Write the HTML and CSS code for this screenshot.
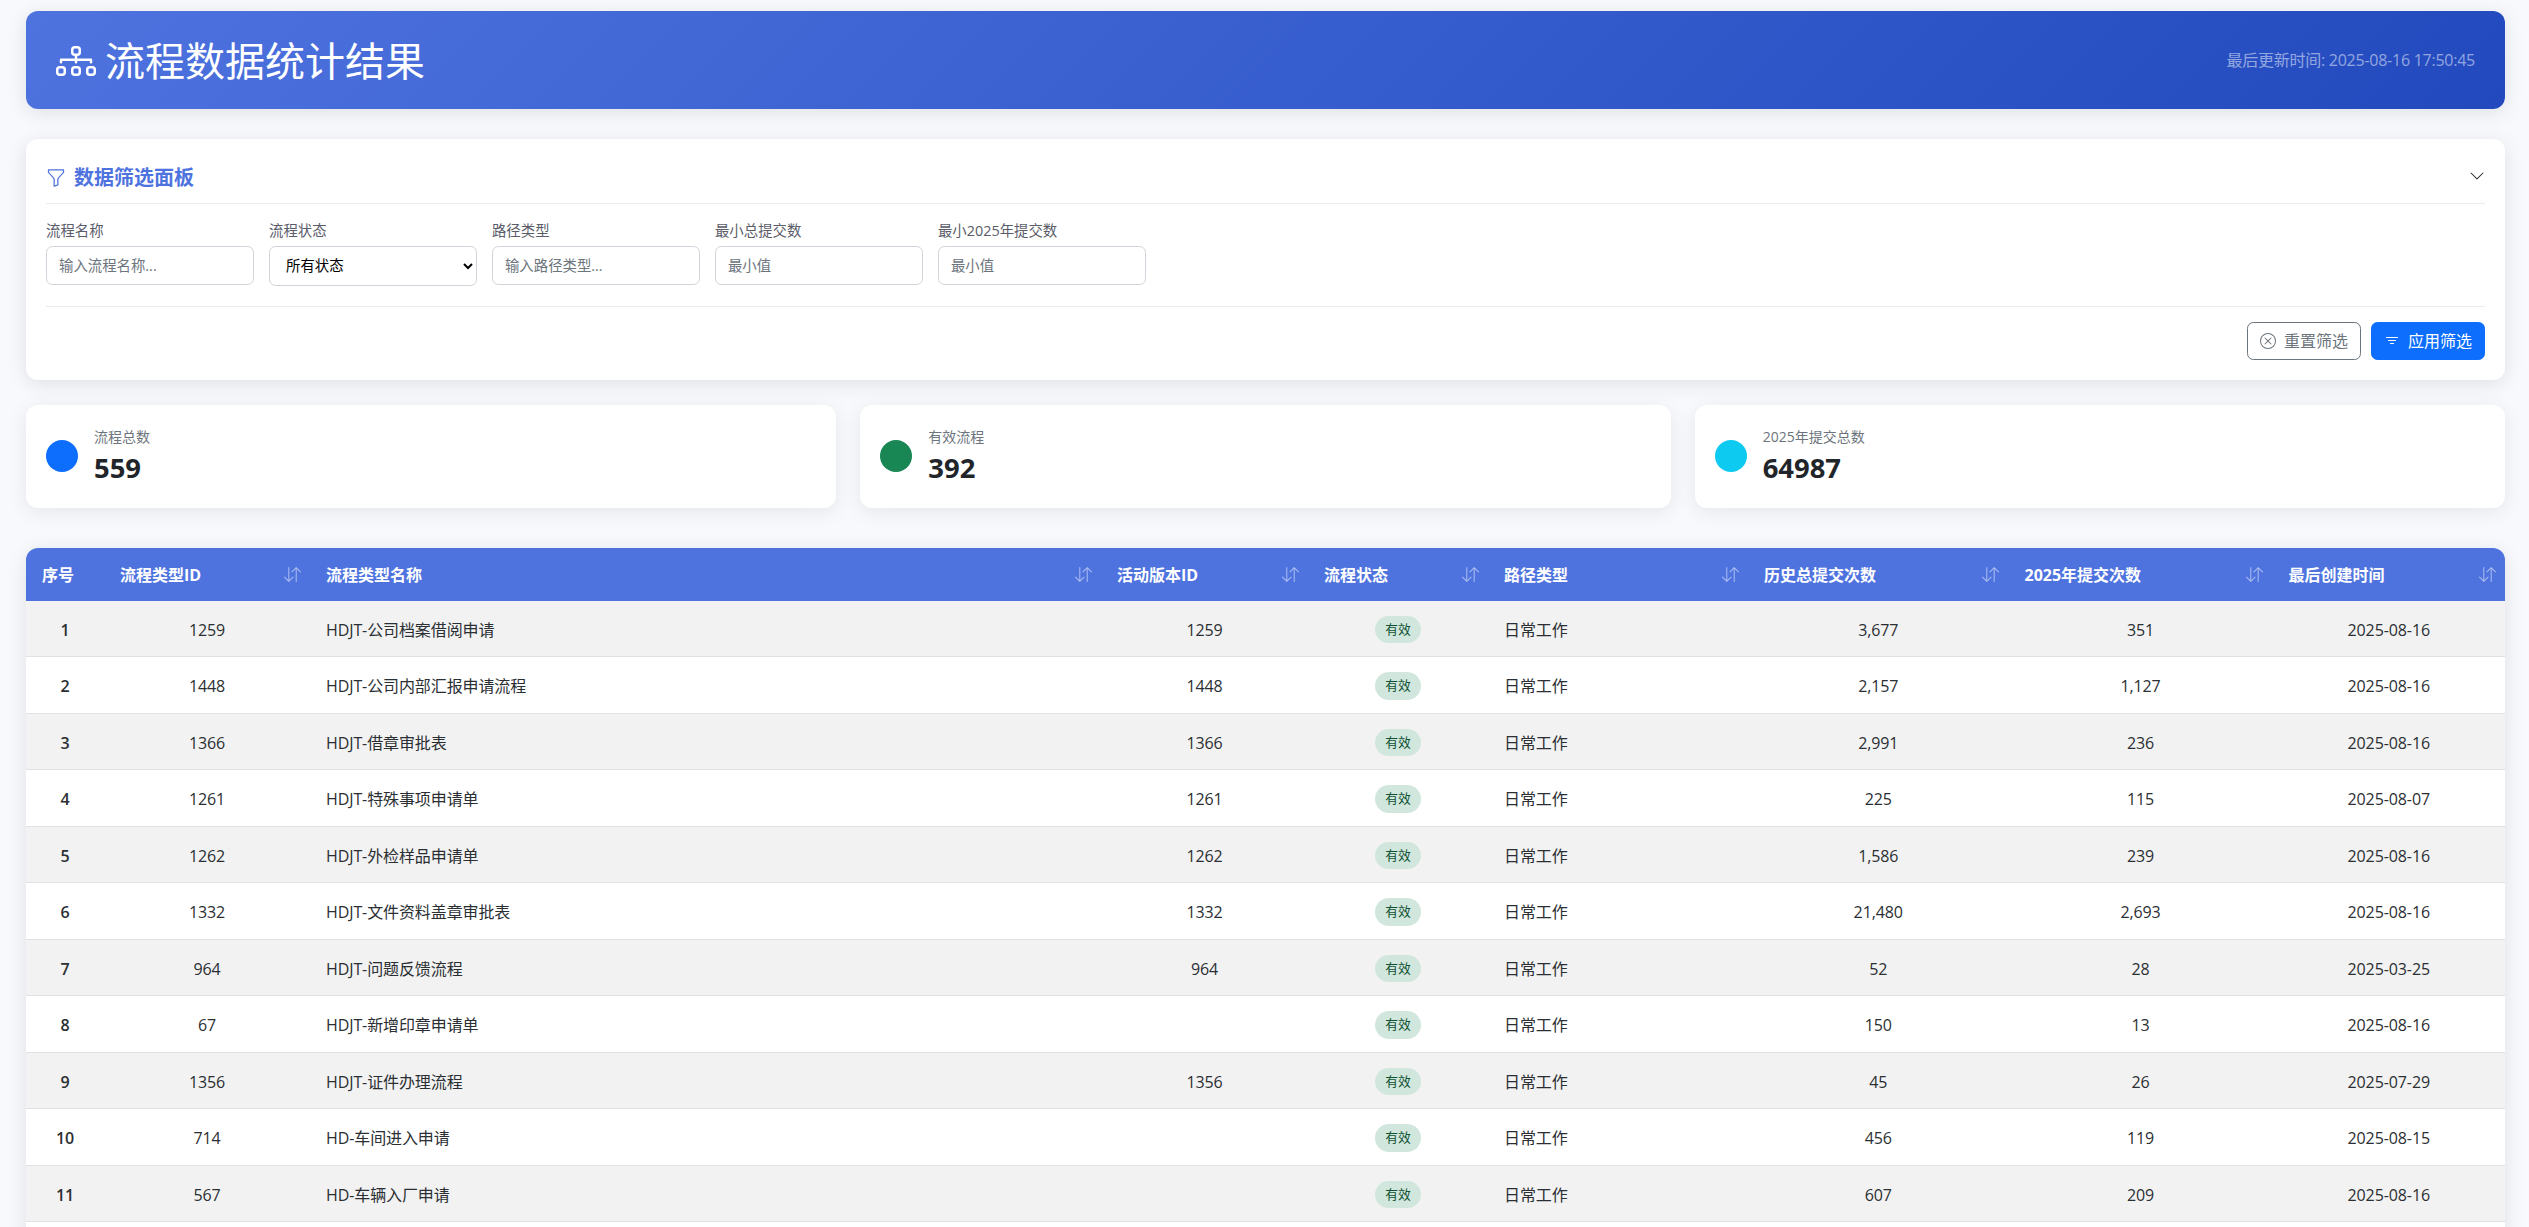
FILE: index.html
```html
<!DOCTYPE html>
<html lang="zh-CN">
<head>
<meta charset="utf-8">
<title>流程数据统计结果</title>
<link rel="stylesheet" href="styles.css">
</head>
<body>
<svg class="defs" width="0" height="0" aria-hidden="true">
  <symbol id="i-sort" viewBox="0 0 16 16"><path fill-rule="evenodd" d="M11.5 15a.5.5 0 0 0 .5-.5V2.707l3.146 3.147a.5.5 0 0 0 .708-.708l-4-4a.5.5 0 0 0-.708 0l-4 4a.5.5 0 1 0 .708.708L11 2.707V14.5a.5.5 0 0 0 .5.5zm-7-14a.5.5 0 0 1 .5.5v11.793l3.146-3.147a.5.5 0 0 1 .708.708l-4 4a.5.5 0 0 1-.708 0l-4-4a.5.5 0 0 1 .708-.708L4 13.293V1.5a.5.5 0 0 1 .5-.5z"/></symbol>
</svg>
<main class="page">
  <header class="hero">
    <h1 class="hero-title">
      <svg class="hero-icon" viewBox="0 0 16 16" fill="currentColor"><path fill-rule="evenodd" d="M6 3.5A1.5 1.5 0 0 1 7.5 2h1A1.5 1.5 0 0 1 10 3.5v1A1.5 1.5 0 0 1 8.5 6v1H14a.5.5 0 0 1 .5.5v1a.5.5 0 0 1-1 0V8h-5v.5a.5.5 0 0 1-1 0V8h-5v.5a.5.5 0 0 1-1 0v-1A.5.5 0 0 1 2 7h5.5V6A1.5 1.5 0 0 1 6 4.5v-1zM8.5 5a.5.5 0 0 0 .5-.5v-1a.5.5 0 0 0-.5-.5h-1a.5.5 0 0 0-.5.5v1a.5.5 0 0 0 .5.5h1zM0 11.5A1.5 1.5 0 0 1 1.5 10h1A1.5 1.5 0 0 1 4 11.5v1A1.5 1.5 0 0 1 2.5 14h-1A1.5 1.5 0 0 1 0 12.5v-1zm1.5-.5a.5.5 0 0 0-.5.5v1a.5.5 0 0 0 .5.5h1a.5.5 0 0 0 .5-.5v-1a.5.5 0 0 0-.5-.5h-1zm4.5.5A1.5 1.5 0 0 1 7.5 10h1a1.5 1.5 0 0 1 1.5 1.5v1A1.5 1.5 0 0 1 8.5 14h-1A1.5 1.5 0 0 1 6 12.5v-1zm1.5-.5a.5.5 0 0 0-.5.5v1a.5.5 0 0 0 .5.5h1a.5.5 0 0 0 .5-.5v-1a.5.5 0 0 0-.5-.5h-1zm4.5.5a1.5 1.5 0 0 1 1.5-1.5h1a1.5 1.5 0 0 1 1.5 1.5v1a1.5 1.5 0 0 1-1.5 1.5h-1a1.5 1.5 0 0 1-1.5-1.5v-1zm1.5-.5a.5.5 0 0 0-.5.5v1a.5.5 0 0 0 .5.5h1a.5.5 0 0 0 .5-.5v-1a.5.5 0 0 0-.5-.5h-1z"/></svg>
      <span>流程数据统计结果</span>
    </h1>
    <div class="hero-time">最后更新时间: 2025-08-16 17:50:45</div>
  </header>

  <section class="panel">
    <div class="panel-head">
      <h2 class="panel-title">
        <svg class="panel-icon" viewBox="0 0 16 16" fill="currentColor"><path d="M1.5 1.5A.5.5 0 0 1 2 1h12a.5.5 0 0 1 .5.5v2a.5.5 0 0 1-.128.334L10 8.692V13.5a.5.5 0 0 1-.342.474l-3 1A.5.5 0 0 1 6 14.5V8.692L1.628 3.834A.5.5 0 0 1 1.5 3.5v-2zm1 .5v1.308l4.372 4.858A.5.5 0 0 1 7 8.5v5.306l2-.666V8.5a.5.5 0 0 1 .128-.334L13.5 3.308V2h-11z"/></svg>
        <span>数据筛选面板</span>
      </h2>
      <svg class="chevron" viewBox="0 0 16 16" fill="currentColor"><path fill-rule="evenodd" d="M1.646 4.646a.5.5 0 0 1 .708 0L8 10.293l5.646-5.647a.5.5 0 0 1 .708.708l-6 6a.5.5 0 0 1-.708 0l-6-6a.5.5 0 0 1 0-.708z"/></svg>
    </div>
    <div class="filters">
      <label class="field"><span class="field-label">流程名称</span><input class="control" type="text" placeholder="输入流程名称..."></label>
      <label class="field"><span class="field-label">流程状态</span><select class="control control-select"><option>所有状态</option><option>有效</option><option>无效</option></select></label>
      <label class="field"><span class="field-label">路径类型</span><input class="control" type="text" placeholder="输入路径类型..."></label>
      <label class="field"><span class="field-label">最小总提交数</span><input class="control" type="text" placeholder="最小值"></label>
      <label class="field"><span class="field-label">最小2025年提交数</span><input class="control" type="text" placeholder="最小值"></label>
    </div>
    <div class="actions">
      <button class="btn btn-reset" type="button">
        <svg class="btn-icon" viewBox="0 0 16 16" fill="currentColor"><path d="M8 15A7 7 0 1 1 8 1a7 7 0 0 1 0 14zm0 1A8 8 0 1 0 8 0a8 8 0 0 0 0 16z"/><path d="M4.646 4.646a.5.5 0 0 1 .708 0L8 7.293l2.646-2.647a.5.5 0 0 1 .708.708L8.707 8l2.647 2.646a.5.5 0 0 1-.708.708L8 8.707l-2.646 2.647a.5.5 0 0 1-.708-.708L7.293 8 4.646 5.354a.5.5 0 0 1 0-.708z"/></svg>
        <span>重置筛选</span>
      </button>
      <button class="btn btn-apply" type="button">
        <svg class="btn-icon" viewBox="0 0 16 16" fill="currentColor"><path d="M6 10.5a.5.5 0 0 1 .5-.5h3a.5.5 0 0 1 0 1h-3a.5.5 0 0 1-.5-.5zm-2-3a.5.5 0 0 1 .5-.5h7a.5.5 0 0 1 0 1h-7a.5.5 0 0 1-.5-.5zm-2-3a.5.5 0 0 1 .5-.5h11a.5.5 0 0 1 0 1h-11a.5.5 0 0 1-.5-.5z"/></svg>
        <span>应用筛选</span>
      </button>
    </div>
  </section>

  <section class="stats">
    <div class="stat"><span class="dot dot-blue"></span><div><div class="stat-label">流程总数</div><div class="stat-value">559</div></div></div>
    <div class="stat"><span class="dot dot-green"></span><div><div class="stat-label">有效流程</div><div class="stat-value">392</div></div></div>
    <div class="stat"><span class="dot dot-cyan"></span><div><div class="stat-label">2025年提交总数</div><div class="stat-value">64987</div></div></div>
  </section>

  <section class="table-card">
    <table class="grid">
      <colgroup>
        <col class="w1"><col class="w2"><col class="w3"><col class="w4"><col class="w5"><col class="w6"><col class="w7"><col class="w8"><col class="w9">
      </colgroup>
      <thead>
        <tr>
          <th>序号</th>
          <th><div class="th-in"><span>流程类型ID</span><svg class="sort"><use href="#i-sort"/></svg></div></th>
          <th><div class="th-in"><span>流程类型名称</span><svg class="sort"><use href="#i-sort"/></svg></div></th>
          <th><div class="th-in"><span>活动版本ID</span><svg class="sort"><use href="#i-sort"/></svg></div></th>
          <th><div class="th-in"><span>流程状态</span><svg class="sort"><use href="#i-sort"/></svg></div></th>
          <th><div class="th-in"><span>路径类型</span><svg class="sort"><use href="#i-sort"/></svg></div></th>
          <th><div class="th-in"><span>历史总提交次数</span><svg class="sort"><use href="#i-sort"/></svg></div></th>
          <th><div class="th-in"><span>2025年提交次数</span><svg class="sort"><use href="#i-sort"/></svg></div></th>
          <th><div class="th-in"><span>最后创建时间</span><svg class="sort"><use href="#i-sort"/></svg></div></th>
        </tr>
      </thead>
      <tbody>
        <tr><td class="num">1</td><td class="mid">1259</td><td>HDJT-公司档案借阅申请</td><td class="mid">1259</td><td class="mid"><span class="badge">有效</span></td><td>日常工作</td><td class="mid">3,677</td><td class="mid">351</td><td class="mid">2025-08-16</td></tr>
        <tr><td class="num">2</td><td class="mid">1448</td><td>HDJT-公司内部汇报申请流程</td><td class="mid">1448</td><td class="mid"><span class="badge">有效</span></td><td>日常工作</td><td class="mid">2,157</td><td class="mid">1,127</td><td class="mid">2025-08-16</td></tr>
        <tr><td class="num">3</td><td class="mid">1366</td><td>HDJT-借章审批表</td><td class="mid">1366</td><td class="mid"><span class="badge">有效</span></td><td>日常工作</td><td class="mid">2,991</td><td class="mid">236</td><td class="mid">2025-08-16</td></tr>
        <tr><td class="num">4</td><td class="mid">1261</td><td>HDJT-特殊事项申请单</td><td class="mid">1261</td><td class="mid"><span class="badge">有效</span></td><td>日常工作</td><td class="mid">225</td><td class="mid">115</td><td class="mid">2025-08-07</td></tr>
        <tr><td class="num">5</td><td class="mid">1262</td><td>HDJT-外检样品申请单</td><td class="mid">1262</td><td class="mid"><span class="badge">有效</span></td><td>日常工作</td><td class="mid">1,586</td><td class="mid">239</td><td class="mid">2025-08-16</td></tr>
        <tr><td class="num">6</td><td class="mid">1332</td><td>HDJT-文件资料盖章审批表</td><td class="mid">1332</td><td class="mid"><span class="badge">有效</span></td><td>日常工作</td><td class="mid">21,480</td><td class="mid">2,693</td><td class="mid">2025-08-16</td></tr>
        <tr><td class="num">7</td><td class="mid">964</td><td>HDJT-问题反馈流程</td><td class="mid">964</td><td class="mid"><span class="badge">有效</span></td><td>日常工作</td><td class="mid">52</td><td class="mid">28</td><td class="mid">2025-03-25</td></tr>
        <tr><td class="num">8</td><td class="mid">67</td><td>HDJT-新增印章申请单</td><td class="mid"></td><td class="mid"><span class="badge">有效</span></td><td>日常工作</td><td class="mid">150</td><td class="mid">13</td><td class="mid">2025-08-16</td></tr>
        <tr><td class="num">9</td><td class="mid">1356</td><td>HDJT-证件办理流程</td><td class="mid">1356</td><td class="mid"><span class="badge">有效</span></td><td>日常工作</td><td class="mid">45</td><td class="mid">26</td><td class="mid">2025-07-29</td></tr>
        <tr><td class="num">10</td><td class="mid">714</td><td>HD-车间进入申请</td><td class="mid"></td><td class="mid"><span class="badge">有效</span></td><td>日常工作</td><td class="mid">456</td><td class="mid">119</td><td class="mid">2025-08-15</td></tr>
        <tr><td class="num">11</td><td class="mid">567</td><td>HD-车辆入厂申请</td><td class="mid"></td><td class="mid"><span class="badge">有效</span></td><td>日常工作</td><td class="mid">607</td><td class="mid">209</td><td class="mid">2025-08-16</td></tr>
        <tr><td colspan="9"></td></tr>
      </tbody>
    </table>
  </section>
</main>
</body>
</html>
```

FILE: styles.css
```css
* { box-sizing: border-box; }
html, body { margin: 0; height: 100%; overflow: hidden; }
body {
  background: #f8f9fc;
  color: #212529;
  font-family: "Open Sans", "Noto Sans CJK SC", sans-serif;
  font-size: 16px;
  line-height: 1.5;
}
.defs { position: absolute; }
.page { padding: 11px 24px 0 26px; }

.hero {
  height: 98px;
  padding: 2px 30px 0;
  display: flex;
  align-items: center;
  justify-content: space-between;
  border-radius: 12px;
  background: linear-gradient(135deg, #4e73df 0%, #224abe 100%);
  box-shadow: 0 4px 20px rgba(0, 0, 0, .1);
  color: #fff;
}
.hero-title {
  margin: 0;
  display: flex;
  align-items: center;
  gap: 9px;
  font-size: 40px;
  font-weight: 400;
  line-height: 48px;
}
.hero-icon { width: 40px; height: 40px; flex: none; }
.hero-time { font-size: 16px; color: rgba(255, 255, 255, .5); letter-spacing: -.25px; margin-top: -3px; }

.panel {
  margin-top: 30px;
  padding: 20px;
  height: 241px;
  background: #fff;
  border-radius: 12px;
  box-shadow: 0 4px 20px rgba(0, 0, 0, .1);
}
.panel-head {
  height: 45px;
  display: flex;
  align-items: center;
  justify-content: space-between;
  border-bottom: 1px solid #e9ecef;
  padding-bottom: 6px;
}
.panel-title {
  margin: 0;
  display: flex;
  align-items: center;
  gap: 8px;
  font-size: 20px;
  font-weight: 600;
  line-height: 30px;
  color: #4e73df;
}
.panel-icon { width: 20px; height: 20px; flex: none; }
.chevron { width: 16px; height: 16px; color: #212529; margin-top: -4px; }

.filters {
  display: flex;
  gap: 15.4px;
  margin-top: 15.5px;
  height: 87.5px;
  border-bottom: 1px solid #e9ecef;
}
.field { display: block; width: 207.6px; }
.field-label {
  display: block;
  font-size: 14.4px;
  line-height: 21.6px;
  margin-bottom: 5px;
  color: #5a5c69;
}
.control {
  display: block;
  width: 100%;
  height: 38.7px;
  padding: 0 12px;
  font: inherit;
  font-size: 14.4px;
  color: #212529;
  background: #fff;
  border: 1px solid #ced4da;
  border-radius: 6.4px;
}
.control::placeholder { color: #6c757d; opacity: 1; }
.control-select { height: 39.6px; padding: 0 12px; color: #000; }

.actions {
  display: flex;
  justify-content: flex-end;
  gap: 10px;
  margin-top: 15px;
}
.btn {
  width: 114px;
  height: 38px;
  padding: 0 12px;
  display: flex;
  align-items: center;
  gap: 8px;
  font: inherit;
  font-size: 16px;
  border-radius: 6.4px;
  border: 1px solid transparent;
  white-space: nowrap;
}
.btn-icon { width: 16px; height: 16px; flex: none; }
.btn-reset { background: #fff; color: #6c757d; border-color: #6c757d; }
.btn-apply { background: #0d6efd; color: #fff; border-color: #0d6efd; }

.stats {
  display: grid;
  grid-template-columns: repeat(3, 1fr);
  gap: 24px;
  margin-top: 25px;
}
.stat {
  height: 102.7px;
  padding: 0 20px;
  display: flex;
  align-items: center;
  gap: 16px;
  background: #fff;
  border-radius: 12px;
  box-shadow: 0 4px 20px rgba(0, 0, 0, .08);
}
.dot { width: 32px; height: 32px; border-radius: 50%; flex: none; }
.dot-blue { background: #0d6efd; }
.dot-green { background: #198754; }
.dot-cyan { background: #0dcaf0; }
.stat-label { font-size: 14px; line-height: 21px; color: #6c757d; }
.stat-value { font-size: 27.4px; font-weight: 700; line-height: 38px; color: #212529; margin-top: 2px; }

.table-card {
  margin-top: 40.3px;
  background: #fff;
  border-radius: 12px 12px 0 0;
  overflow: hidden;
  box-shadow: 0 4px 20px rgba(0, 0, 0, .1);
}
.grid {
  width: 100%;
  table-layout: fixed;
  border-collapse: separate;
  border-spacing: 0;
}
.w1 { width: 78px; }
.w2 { width: 206px; }
.w3 { width: 791px; }
.w4 { width: 207px; }
.w5 { width: 180px; }
.w6 { width: 260px; }
.w7 { width: 260.5px; }
.w8 { width: 264px; }
.w9 { width: 232.5px; }

.grid th {
  height: 53px;
  padding: 1px 9.5px 0 16px;
  background: #4e73df;
  color: #fff;
  font-size: 16px;
  font-weight: 700;
  text-align: left;
}
.th-in { display: flex; align-items: center; justify-content: space-between; }
.sort { width: 17px; height: 17px; fill: #fff; opacity: .5; flex: none; }

.grid td {
  height: 56.5px;
  padding: 2px 16px 0;
  font-size: 16px;
  letter-spacing: -.1px;
  color: #2b2f33;
  border-bottom: 1px solid #dee2e6;
  vertical-align: middle;
}
.grid tbody tr:nth-child(odd) td { background: #f2f2f2; }
.grid tbody tr:nth-child(even) td { background: #fff; }
.grid .mid { text-align: center; }
.grid .num { text-align: center; font-weight: 600; }
.badge {
  display: inline-block;
  width: 46px;
  height: 27.5px;
  line-height: 27.5px;
  text-align: center;
  font-size: 12.8px;
  letter-spacing: 0;
  font-weight: 400;
  color: #0f5132;
  background: #d1e7dd;
  border-radius: 14px;
  vertical-align: middle;
}
```
